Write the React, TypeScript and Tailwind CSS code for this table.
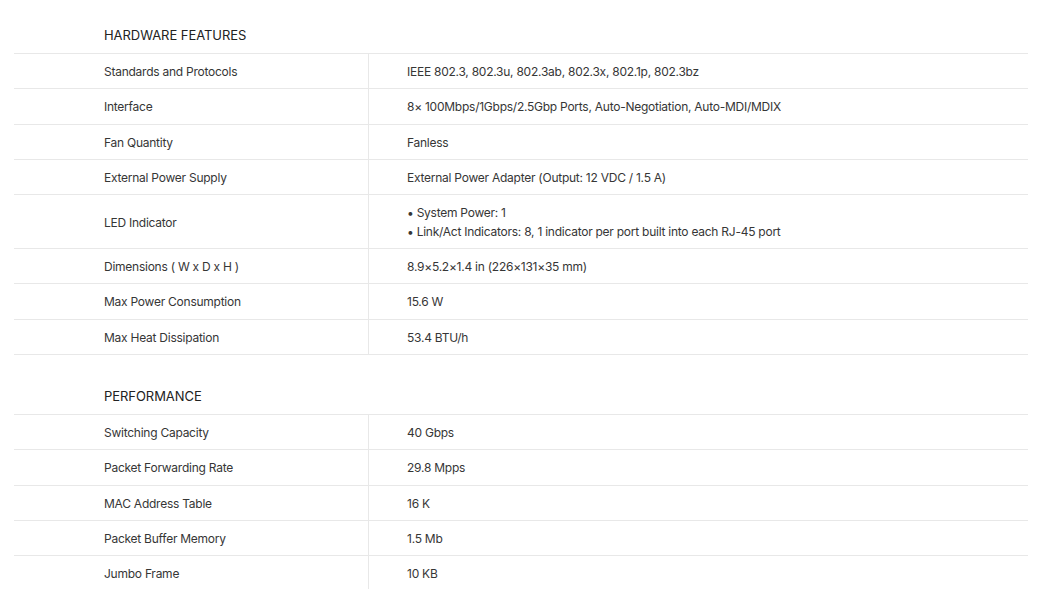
type Row = { label: string; value: string | string[] };

const hardware: Row[] = [
  { label: "Standards and Protocols", value: "IEEE 802.3, 802.3u, 802.3ab, 802.3x, 802.1p, 802.3bz" },
  { label: "Interface", value: "8× 100Mbps/1Gbps/2.5Gbp Ports, Auto-Negotiation, Auto-MDI/MDIX" },
  { label: "Fan Quantity", value: "Fanless" },
  { label: "External Power Supply", value: "External Power Adapter (Output: 12 VDC / 1.5 A)" },
  {
    label: "LED Indicator",
    value: ["• System Power: 1", "• Link/Act Indicators: 8, 1 indicator per port built into each RJ-45 port"],
  },
  { label: "Dimensions ( W x D x H )", value: "8.9×5.2×1.4 in (226×131×35 mm)" },
  { label: "Max Power Consumption", value: "15.6 W" },
  { label: "Max Heat Dissipation", value: "53.4 BTU/h" },
];

const performance: Row[] = [
  { label: "Switching Capacity", value: "40 Gbps" },
  { label: "Packet Forwarding Rate", value: "29.8 Mpps" },
  { label: "MAC Address Table", value: "16 K" },
  { label: "Packet Buffer Memory", value: "1.5 Mb" },
  { label: "Jumbo Frame", value: "10 KB" },
];

const SpecRow = ({ row }: { row: Row }) => (
  <div className="grid grid-cols-[355px_1fr] border-b border-[#e8e8e8]">
    <div className="flex items-center border-r border-[#e8e8e8] pl-[90px] pt-[9px] pb-[7px] leading-[18.3px]">
      {row.label}
    </div>
    <div className="flex flex-col justify-center pl-[38px] pt-[9px] pb-[7px] leading-[18.3px]">
      {Array.isArray(row.value) ? (
        row.value.map((v) => (
          <div key={v} className="leading-[18.5px]">
            {v}
          </div>
        ))
      ) : (
        <div>{row.value}</div>
      )}
    </div>
  </div>
);

const Section = ({ title, rows, first }: { title: string; rows: Row[]; first?: boolean }) => (
  <section className={first ? "pt-[17px]" : "pt-[23px]"}>
    <h3 className="flex h-[36px] items-center pl-[90px] pt-[2px] text-[13px] tracking-[-0.05px] text-[#222]">
      {title}
    </h3>
    <div className="border-t border-[#e8e8e8]">
      {rows.map((r) => (
        <SpecRow key={r.label} row={r} />
      ))}
    </div>
  </section>
);

export default function App() {
  return (
    <div className="min-h-screen bg-white" style={{ fontFamily: "Inter, 'Noto Sans', sans-serif" }}>
      <div className="mx-[14px] text-[12px] tracking-[-0.25px] text-[#363636]">
        <Section title="HARDWARE FEATURES" rows={hardware} first />
        <Section title="PERFORMANCE" rows={performance} />
      </div>
    </div>
  );
}
